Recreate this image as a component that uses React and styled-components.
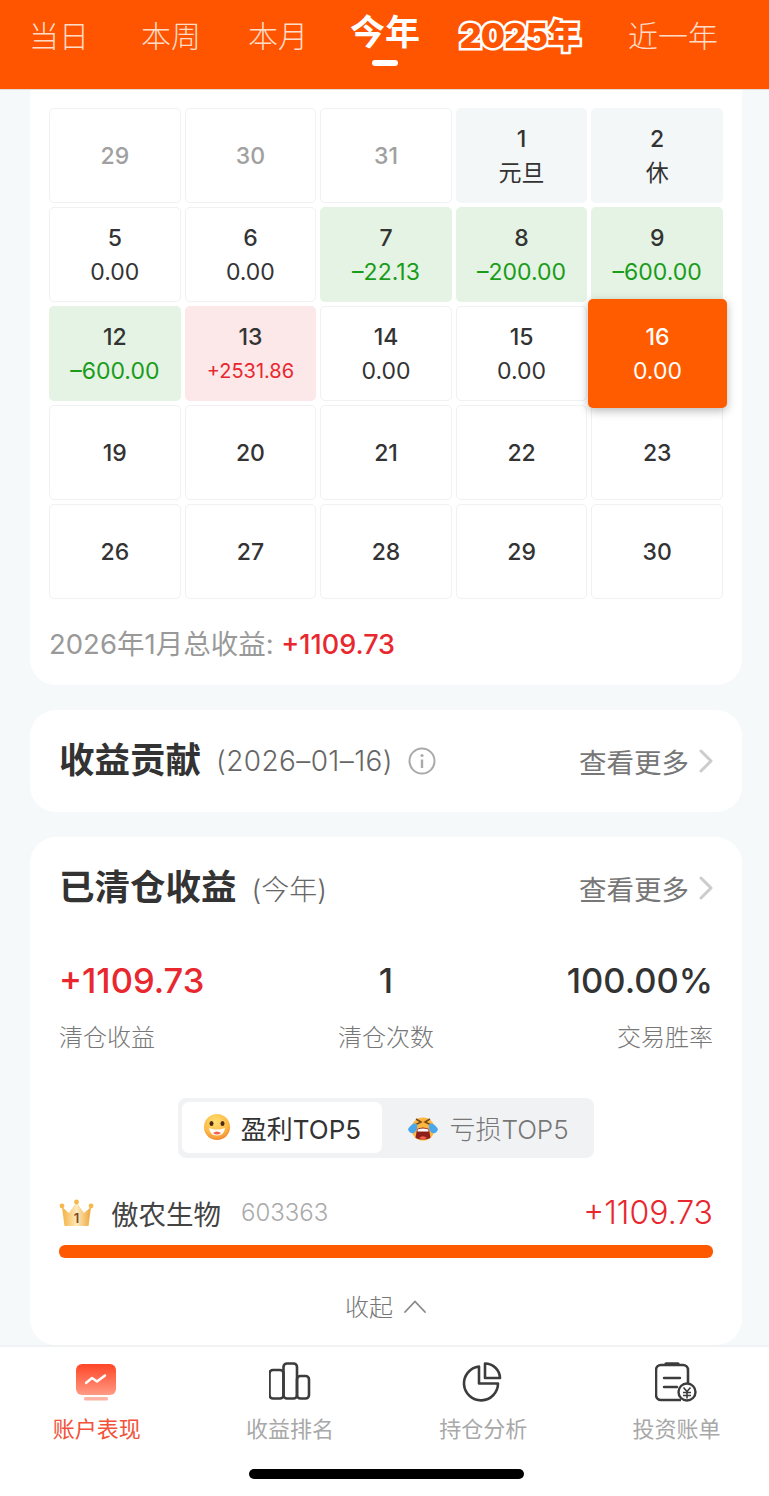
import React from "react";
import styled, { createGlobalStyle } from "styled-components";

const Global = createGlobalStyle`
  html, body { margin: 0; padding: 0; width: 769px; height: 1496px; overflow: hidden; background: #f5f9fa; }
  body { font-family: Inter, "Noto Sans CJK SC", sans-serif; color: #333; }
  * { box-sizing: border-box; }
`;

const Page = styled.div`
  width: 769px;
  height: 1496px;
  display: flex;
  flex-direction: column;
  overflow: hidden;
`;

const Header = styled.header`
  height: 90px;
  flex: none;
  background: #ff5500;
  border-bottom: 1px solid #e6dcd6;
  display: flex;
  align-items: flex-start;
  padding: 16px 0 0 29px;
`;

const Tab = styled.div`
  flex: none;
  margin-left: ${(p) => p.$gap || 0}px;
  display: flex;
  flex-direction: column;
  align-items: center;
  color: ${(p) => (p.$active ? "#fff" : "#ffdcc8")};
  font-size: ${(p) => (p.$active ? 35 : 30)}px;
  font-weight: ${(p) => (p.$active ? 600 : 300)};
  line-height: ${(p) => (p.$active ? 32 : 40)}px;
`;

const TabMark = styled.span`
  display: block;
  width: 26px;
  height: 6px;
  margin-top: 12px;
  border-radius: 3px;
  background: #fff;
`;

const OutlineTab = styled.div`
  flex: none;
  width: 122px;
  margin-left: 39px;
  text-align: center;
  white-space: nowrap;
  font-size: 33.5px;
  line-height: 40px;
  font-weight: 900;
  letter-spacing: -0.5px;
  color: #ff5500;
  -webkit-text-stroke: 5px #fff;
  paint-order: stroke fill;
`;

const Main = styled.main`
  flex: 1;
  min-height: 0;
  padding: 0 27px 0 30px;
  display: flex;
  flex-direction: column;
  gap: 25px;
`;

const CalendarCard = styled.section`
  background: #fff;
  border-radius: 0 0 26px 26px;
  height: 596px;
  padding: 18px 19px 0;
`;

const Grid = styled.div`
  display: grid;
  grid-template-columns: repeat(5, 1fr);
  grid-auto-rows: 95.1px;
  gap: 4px;
`;

const tones = {
  plain: "background:#fff;border:1px solid #f0f1f2;color:#333;",
  muted: "background:#fff;border:1px solid #f0f1f2;color:#a0a0a0;",
  holiday: "background:#f4f7f8;color:#333;",
  down: "background:#e4f3e3;color:#333;",
  up: "background:#fce8e9;color:#333;",
  today: "background:#ff5c00;color:#fff;margin:-7px -4px -7px -3.5px;z-index:2;box-shadow:0 3px 10px rgba(0,0,0,.28);",
};

const Cell = styled.div`
  ${(p) => tones[p.$tone || "plain"]}
  border-radius: 5px;
  display: flex;
  flex-direction: column;
  align-items: center;
  justify-content: center;
  font-size: 23px;
  line-height: 34px;
  font-weight: 500;
`;

const CellValue = styled.span`
  font-weight: 400;
  font-size: ${(p) => (p.$small ? 20 : 23)}px;
  color: ${(p) => (p.$c === "down" ? "#1a9c1a" : p.$c === "up" ? "#e8272e" : "inherit")};
`;

const MonthTotal = styled.div`
  margin-top: 26.5px;
  font-size: 27.5px;
  line-height: 36px;
  color: #999;
`;

const RedText = styled.span`
  color: #e8272e;
  font-size: 27px;
  font-weight: 500;
`;

const Card = styled.section`
  background: #fff;
  border-radius: 26px;
  height: ${(p) => p.$h}px;
  padding: 0 29px;
`;

const TitleRow = styled.div`
  display: flex;
  align-items: center;
  height: ${(p) => p.$h}px;
  color: #333;
`;

const Title = styled.h2`
  margin: 0;
  font-size: 35.5px;
  line-height: 44px;
  font-weight: 700;
  color: #333;
`;

const Note = styled.span`
  margin-left: 15px;
  font-size: 28px;
  font-weight: 300;
  letter-spacing: ${(p) => (p.$date ? 0.4 : 0)}px;
  color: #666;
`;

const More = styled.div`
  margin-left: auto;
  display: flex;
  align-items: center;
  gap: 10px;
  font-size: 27.5px;
  font-weight: 400;
  color: #777;
`;

const Stats = styled.div`
  display: grid;
  grid-template-columns: 1fr 1fr 1fr;
  margin-top: 20px;
`;

const Stat = styled.div`
  display: flex;
  flex-direction: column;
  align-items: ${(p) => p.$align};
`;

const StatValue = styled.div`
  font-size: 34.5px;
  line-height: 44px;
  font-weight: 500;
  color: ${(p) => (p.$red ? "#e8272e" : "#333")};
`;

const StatLabel = styled.div`
  margin-top: 18px;
  font-size: 24px;
  line-height: 34px;
  font-weight: 300;
  color: #777;
`;

const Switch = styled.div`
  width: 416px;
  height: 60px;
  margin: 43px auto 0;
  padding: 4px;
  display: flex;
  background: #f1f2f4;
  border-radius: 8px;
`;

const SwitchItem = styled.div`
  flex: none;
  width: ${(p) => (p.$on ? 200 : 208)}px;
  height: ${(p) => (p.$on ? 51 : 52)}px;
  padding-left: ${(p) => (p.$on ? 0 : 4)}px;
  display: flex;
  align-items: center;
  justify-content: center;
  gap: 10px;
  border-radius: 7px;
  background: ${(p) => (p.$on ? "#fff" : "transparent")};
  font-size: 26px;
  font-weight: ${(p) => (p.$on ? 400 : 300)};
  color: ${(p) => (p.$on ? "#333" : "#777")};
`;

const RankRow = styled.div`
  margin-top: 33px;
  display: flex;
  align-items: center;
  height: 44px;
`;

const RankName = styled.span`
  margin-left: 17px;
  font-size: 27.5px;
  color: #444;
  font-weight: 400;
`;

const RankCode = styled.span`
  margin-left: 20px;
  font-size: 24px;
  font-weight: 300;
  color: #aaa;
`;

const RankValue = styled.span`
  margin-left: auto;
  font-size: 32px;
  font-weight: 300;
  color: #e8272e;
`;

const Bar = styled.div`
  margin-top: 10px;
  height: 13px;
  border-radius: 6px;
  background: #ff5900;
  width: ${(p) => p.$w}%;
`;

const Collapse = styled.div`
  margin-top: 31px;
  display: flex;
  justify-content: center;
  align-items: center;
  gap: 10px;
  height: 34px;
  font-size: 24px;
  font-weight: 300;
  color: #777;
`;

const Nav = styled.nav`
  flex: none;
  height: 151px;
  background: #fff;
  border-top: 2px solid #f1f2f3;
  display: flex;
  flex-direction: column;
  position: relative;
`;

const NavItems = styled.div`
  display: grid;
  grid-template-columns: repeat(4, 193.3px);
  padding-top: 15px;
`;

const NavItem = styled.div`
  display: flex;
  flex-direction: column;
  align-items: center;
  gap: 11px;
  font-size: 22px;
  line-height: 32px;
  font-weight: 400;
  color: ${(p) => (p.$on ? "#f2523a" : "#a8a8a8")};
`;

const HomeBar = styled.div`
  width: 275px;
  height: 10px;
  margin: 24px 0 0 249px;
  border-radius: 5px;
  background: #000;
`;

const Chevron = () => (
  <svg width="14" height="24" viewBox="0 0 14 24" fill="none">
    <path d="M2 2l10 10L2 22" stroke="#ccc" strokeWidth="3" strokeLinecap="round" strokeLinejoin="round" />
  </svg>
);

const InfoIcon = () => (
  <svg width="28" height="28" viewBox="0 0 28 28" fill="none" style={{ marginLeft: 15 }}>
    <circle cx="14" cy="14" r="12.5" stroke="#aaa" strokeWidth="2" />
    <circle cx="14" cy="8.5" r="1.6" fill="#aaa" />
    <path d="M14 12.5v8.5" stroke="#aaa" strokeWidth="2.4" />
  </svg>
);

const UpIcon = () => (
  <svg width="24" height="14" viewBox="0 0 24 14" fill="none">
    <path d="M2 13L12 2.5 22 13" stroke="#888" strokeWidth="1.8" strokeLinecap="round" />
  </svg>
);

const SmileEmoji = () => (
  <svg width="28" height="28" viewBox="0 0 28 28">
    <defs>
      <radialGradient id="sm" cx="45%" cy="30%" r="75%">
        <stop offset="0" stopColor="#ffe070" />
        <stop offset="0.65" stopColor="#fdb945" />
        <stop offset="1" stopColor="#ef7d2a" />
      </radialGradient>
    </defs>
    <circle cx="14" cy="14" r="13" fill="url(#sm)" />
    <ellipse cx="8.5" cy="10.5" rx="2" ry="2.6" fill="#4a2a1a" />
    <ellipse cx="19.5" cy="10.5" rx="2" ry="2.6" fill="#4a2a1a" />
    <path d="M6 15q8 3 16 0q-1 7.5-8 7.5T6 15z" fill="#fff" />
    <path d="M10 20q4-3 8 0q-4 3-8 0z" fill="#f4604c" />
  </svg>
);

const CryEmoji = () => (
  <svg width="32" height="28" viewBox="0 0 32 28">
    <circle cx="16" cy="15" r="11.5" fill="#fdb63f" />
    <path d="M9 5l5 3-5 2.5M23 5l-5 3 5 2.5" stroke="#7a4a1a" strokeWidth="1.6" fill="none" />
    <path d="M10 15q6-3 12 0l1.5 9q-7.5 3-15 0z" fill="#8e1f1c" />
    <path d="M10.5 15.5q5.5-2 11 0v2h-11z" fill="#fff" />
    <path d="M12 24q4-3.5 8 0q-4 2-8 0z" fill="#f4604c" />
    <path d="M1 15q5-7 9-5q1 6-3 9q-5 1-6-4z" fill="#4aa8ea" />
    <path d="M31 15q-5-7-9-5q-1 6 3 9q5 1 6-4z" fill="#4aa8ea" />
  </svg>
);

const Crown = () => (
  <svg width="35" height="28" viewBox="0 0 35 28">
    <defs>
      <linearGradient id="cr" x1="0" y1="0" x2="1" y2="0">
        <stop offset="0" stopColor="#f4b13f" />
        <stop offset="0.5" stopColor="#fde9bd" />
        <stop offset="1" stopColor="#f0a63a" />
      </linearGradient>
    </defs>
    <path d="M3 8l7 6 7.5-11L25 14l7-6-2.5 19H5.5z" fill="url(#cr)" />
    <circle cx="3" cy="7" r="2.4" fill="#f5b84c" />
    <circle cx="17.5" cy="3" r="2.4" fill="#f5b84c" />
    <circle cx="32" cy="7" r="2.4" fill="#f5b84c" />
    <text x="17.5" y="24" textAnchor="middle" fontSize="13" fontWeight="600" fill="#7a4a1a" fontFamily="Inter">1</text>
  </svg>
);

const AccountIcon = () => (
  <svg width="42" height="40" viewBox="1 -2 42 40">
    <defs>
      <linearGradient id="ac" x1="0" y1="0" x2="0" y2="1">
        <stop offset="0" stopColor="#ff4526" />
        <stop offset="1" stopColor="#ff9a84" />
      </linearGradient>
    </defs>
    <rect x="1" y="0" width="40" height="31" rx="6" fill="url(#ac)" />
    <rect x="9" y="33" width="24" height="3.5" rx="1.5" fill="#ffb3a4" />
    <path d="M11 19l6-5 5 3.5 8-6" stroke="#fff" strokeWidth="2.4" fill="none" strokeLinecap="round" strokeLinejoin="round" />
  </svg>
);

const RankIcon = () => (
  <svg width="42" height="40" viewBox="1 0 42 40" fill="none" stroke="#3c3c3c" strokeWidth="2.6">
    <rect x="1.5" y="8" width="14" height="28.5" rx="3.5" />
    <rect x="15.5" y="1.5" width="13.5" height="35" rx="3.5" />
    <rect x="29" y="14" width="12" height="22.5" rx="3.5" />
  </svg>
);

const PieIcon = () => (
  <svg width="42" height="40" viewBox="2 0 42 40" fill="none" stroke="#3c3c3c" strokeWidth="2.6" strokeLinejoin="round">
    <path d="M19 4.5A17 17 0 1 0 38 21.5H19z" />
    <path d="M25 1.5A15 15 0 0 1 40 16H25z" />
  </svg>
);

const BillIcon = () => (
  <svg width="44" height="40" viewBox="2 0 44 40" fill="none">
    <path d="M28 38H8a5 5 0 0 1-5-5V8a5 5 0 0 1 5-5h22a5 5 0 0 1 5 5v17" stroke="#3c3c3c" strokeWidth="2.6" />
    <path d="M13 2h12" stroke="#3c3c3c" strokeWidth="3.4" strokeLinecap="round" />
    <path d="M11 16h16M11 25h13" stroke="#3c3c3c" strokeWidth="2.4" strokeLinecap="round" />
    <circle cx="34" cy="30" r="8.5" fill="#fff" stroke="#3c3c3c" strokeWidth="2.4" />
    <path d="M30.5 25.5l3.5 4 3.5-4M30 30.5h8M30 33.5h8M34 30v6.5" stroke="#3c3c3c" strokeWidth="1.6" />
  </svg>
);

const days = [
  { d: 29, tone: "muted" }, { d: 30, tone: "muted" }, { d: 31, tone: "muted" },
  { d: 1, v: "元旦", tone: "holiday" }, { d: 2, v: "休", tone: "holiday" },
  { d: 5, v: "0.00" }, { d: 6, v: "0.00" },
  { d: 7, v: "–22.13", tone: "down", c: "down" }, { d: 8, v: "–200.00", tone: "down", c: "down" }, { d: 9, v: "–600.00", tone: "down", c: "down" },
  { d: 12, v: "–600.00", tone: "down", c: "down" }, { d: 13, v: "+2531.86", tone: "up", c: "up", small: true },
  { d: 14, v: "0.00" }, { d: 15, v: "0.00" }, { d: 16, v: "0.00", tone: "today" },
  { d: 19 }, { d: 20 }, { d: 21 }, { d: 22 }, { d: 23 },
  { d: 26 }, { d: 27 }, { d: 28 }, { d: 29 }, { d: 30 },
];

export default function App() {
  return (
    <Page>
      <Global />
      <Header>
        <Tab>当日</Tab>
        <Tab $gap={52}>本周</Tab>
        <Tab $gap={47}>本月</Tab>
        <Tab $gap={42} $active>今年<TabMark /></Tab>
        <OutlineTab>2025年</OutlineTab>
        <Tab $gap={47}>近一年</Tab>
      </Header>
      <Main>
        <CalendarCard>
          <Grid>
            {days.map((x, i) => (
              <Cell key={i} $tone={x.tone}>
                {x.d}
                {x.v && <CellValue $c={x.c} $small={x.small}>{x.v}</CellValue>}
              </Cell>
            ))}
          </Grid>
          <MonthTotal>2026年1月总收益: <RedText>+1109.73</RedText></MonthTotal>
        </CalendarCard>
        <Card $h={102}>
          <TitleRow $h={102}>
            <Title>收益贡献</Title>
            <Note $date>(2026–01–16)</Note>
            <InfoIcon />
            <More>查看更多<Chevron /></More>
          </TitleRow>
        </Card>
        <Card $h={509}>
          <TitleRow $h={102}>
            <Title>已清仓收益</Title>
            <Note>(今年)</Note>
            <More>查看更多<Chevron /></More>
          </TitleRow>
          <Stats>
            <Stat $align="flex-start">
              <StatValue $red>+1109.73</StatValue>
              <StatLabel>清仓收益</StatLabel>
            </Stat>
            <Stat $align="center">
              <StatValue>1</StatValue>
              <StatLabel>清仓次数</StatLabel>
            </Stat>
            <Stat $align="flex-end">
              <StatValue>100.00%</StatValue>
              <StatLabel>交易胜率</StatLabel>
            </Stat>
          </Stats>
          <Switch>
            <SwitchItem $on><SmileEmoji />盈利TOP5</SwitchItem>
            <SwitchItem><CryEmoji />亏损TOP5</SwitchItem>
          </Switch>
          <RankRow>
            <Crown />
            <RankName>傲农生物</RankName>
            <RankCode>603363</RankCode>
            <RankValue>+1109.73</RankValue>
          </RankRow>
          <Bar $w={100} />
          <Collapse>收起<UpIcon /></Collapse>
        </Card>
      </Main>
      <Nav>
        <NavItems>
          <NavItem $on><AccountIcon />账户表现</NavItem>
          <NavItem><RankIcon />收益排名</NavItem>
          <NavItem><PieIcon />持仓分析</NavItem>
          <NavItem><BillIcon />投资账单</NavItem>
        </NavItems>
        <HomeBar />
      </Nav>
    </Page>
  );
}
